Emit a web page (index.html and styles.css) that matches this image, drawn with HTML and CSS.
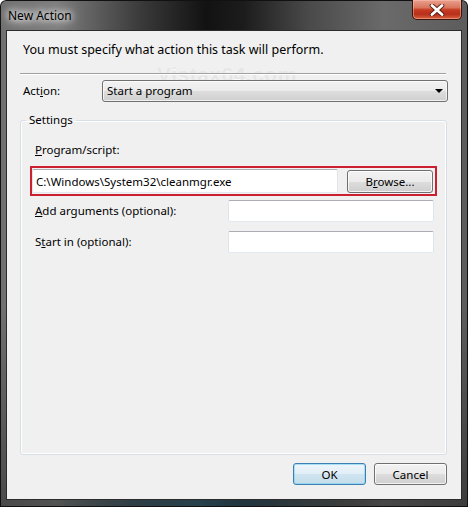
FILE: index.html
```html
<!DOCTYPE html>
<html lang="en">
<head>
    <meta charset="UTF-8">
    <meta name="viewport" content="width=device-width, initial-scale=1.0">
    <title>New Action</title>
    <link rel="stylesheet" href="styles.css">
</head>
<body>

<div class="window">
    <div class="titlebar">
        <span class="title">New Action</span>
        <button class="close" aria-label="Close">
            <svg width="16" height="12" viewBox="0 0 16 12">
                <path d="M3 1.5 L13 10.5 M13 1.5 L3 10.5" stroke="#5a1c10" stroke-width="4.6" stroke-linecap="round"/>
                <path d="M3 1.5 L13 10.5 M13 1.5 L3 10.5" stroke="#fff" stroke-width="2.8" stroke-linecap="round"/>
            </svg>
        </button>
    </div>

    <div class="client">
        <div class="watermark">Vistax64.com</div>

        <p class="intro">You must specify what action this task will perform.</p>
        <hr class="sep">

        <div class="action-row">
            <label class="action-label">Act<u>i</u>on:</label>
            <div class="combo">
                <span>Start a program</span>
                <span class="arrow"></span>
            </div>
        </div>

        <fieldset class="group">
            <legend>Settings</legend>

            <label class="field-label"><u>P</u>rogram/script:</label>
            <div class="highlight">
                <input class="text wide" type="text" value="C:\Windows\System32\cleanmgr.exe">
                <button class="btn browse">B<u>r</u>owse...</button>
            </div>

            <div class="row">
                <label class="field-label"><u>A</u>dd arguments (optional):</label>
                <input class="text small" type="text">
            </div>
            <div class="row">
                <label class="field-label">S<u>t</u>art in (optional):</label>
                <input class="text small" type="text">
            </div>
        </fieldset>

        <div class="actions">
            <button class="btn default">OK</button>
            <button class="btn">Cancel</button>
        </div>
    </div>
</div>

</body>
</html>
```

FILE: styles.css
```css
body {
    margin: 0;
    background: #ffffff;
    font-family: 'Noto Sans', 'Open Sans', sans-serif;
    font-size: 11.5px;
    line-height: 16px;
    color: #000;
}

.window {
    width: 468px;
    height: 507px;
    box-sizing: border-box;
    padding: 0 6px 7px 6px;
    display: flex;
    flex-direction: column;
    border-radius: 6px 6px 0 0;
    background:
        radial-gradient(ellipse 150px 260px at 200px 510px, rgba(60, 110, 130, 0.55), transparent),
        linear-gradient(to bottom, transparent 60%, rgba(0, 0, 0, 0.35)),
        linear-gradient(to right, #6f6f6f 0%, #7d7d7d 12%, #3a3a3a 30%, #121212 44%, #1c1c1c 52%, #4a4a4a 66%, #6a6a6a 82%, #5c5c5c 100%);
    box-shadow: inset 0 0 0 1px #111;
}

/* title bar */
.titlebar {
    height: 30px;
    display: flex;
    align-items: flex-start;
}

.title {
    margin-top: 8px;
    margin-left: 2px;
    padding: 0 6px 0 0;
    font-size: 12px;
    color: #000;
    text-shadow: 0 0 6px #fff, 0 0 10px #fff, 0 0 14px #eee;
}

.close {
    margin-left: auto;
    width: 50px;
    height: 20px;
    padding: 0;
    border: 1px solid #3c160e;
    border-top: none;
    border-radius: 0 0 5px 5px;
    background: linear-gradient(to bottom, #eaa090 0%, #d8765c 40%, #c63a22 52%, #b8301a 75%, #d8623f 100%);
    box-shadow: inset 0 0 0 1px rgba(255, 200, 180, 0.45);
    display: flex;
    align-items: center;
    justify-content: center;
}

/* client area */
.client {
    flex: 1;
    position: relative;
    display: flex;
    flex-direction: column;
    padding: 11px 14px 14px 13px;
    background: #f0f0f0;
    border: 1px solid #2b2b2b;
}

.watermark {
    position: absolute;
    left: 150px;
    top: 33px;
    font-family: 'Liberation Sans', Arial, sans-serif;
    font-weight: bold;
    font-size: 21px;
    line-height: 21px;
    color: #e6e6e6;
    text-shadow: 0 1px 0 #fbfbfb;
    letter-spacing: 0.5px;
}

.intro {
    position: relative;
    margin: 0;
    padding-left: 3px;
    font-size: 12.5px;
}

.sep {
    position: relative;
    margin: 15px 1px 0 0;
    height: 0;
    border: none;
    border-top: 1px solid #a0a0a0;
    border-bottom: 1px solid #ffffff;
}

.action-row {
    position: relative;
    display: flex;
    align-items: center;
    margin-top: 5px;
}

.action-label {
    width: 79px;
    padding-left: 3px;
}

.combo {
    flex: 1;
    height: 20px;
    display: flex;
    align-items: center;
    padding-left: 4px;
    border: 1px solid #707070;
    border-radius: 3px;
    background: linear-gradient(to bottom, #f2f2f2 0%, #ebebeb 50%, #dddddd 51%, #cfcfcf 100%);
    box-shadow: inset 0 0 0 1px rgba(255, 255, 255, 0.7);
    margin-right: -1px;
}

.arrow {
    margin-left: auto;
    margin-right: 4px;
    width: 0;
    height: 0;
    border-left: 4px solid transparent;
    border-right: 4px solid transparent;
    border-top: 4px solid #000;
}

/* settings group */
.group {
    flex: 1;
    margin: 10px 0 0 0;
    padding: 14px 9px 0 9px;
    border: 1px solid #d5dfe5;
    border-radius: 3px;
    box-shadow: inset 0 0 0 1px #ffffff;
    min-width: 0;
}

.group legend {
    padding: 0 3px;
    margin-left: -4px;
}

.field-label {
    display: block;
    padding-left: 5px;
}

.highlight {
    display: flex;
    align-items: flex-start;
    margin-top: 8px;
    padding: 1px 2px 1px 0;
    border: 2px solid #cc1f2f;
}

.text {
    box-sizing: border-box;
    margin: 0;
    padding: 0 3px;
    font-family: inherit;
    font-size: 11.5px;
    color: #000;
    background: #fff;
    border: 1px solid #e2e3ea;
    border-top-color: #abadb3;
    border-bottom-color: #e3e9ef;
    border-radius: 2px;
    outline: none;
}

.text.wide {
    width: 306px;
    height: 24px;
}

.text.small {
    width: 206px;
    height: 22px;
    margin-left: auto;
    margin-right: 3px;
}

.row {
    display: flex;
    align-items: center;
    margin-top: 4px;
}

.row + .row {
    margin-top: 9px;
}

/* buttons */
.btn {
    font-family: inherit;
    font-size: 11.5px;
    color: #000;
    height: 22px;
    padding: 0;
    border: 1px solid #707070;
    border-radius: 3px;
    background: linear-gradient(to bottom, #f2f2f2 0%, #ebebeb 50%, #dddddd 51%, #cfcfcf 100%);
    box-shadow: inset 0 0 0 1px rgba(255, 255, 255, 0.75);
}

.browse {
    width: 86px;
    height: 23px;
    margin-left: auto;
    margin-top: 1px;
}

.actions {
    display: flex;
    justify-content: flex-end;
    gap: 8px;
    margin-top: 8px;
}

.actions .btn {
    width: 73px;
}

.btn.default {
    border-color: #3c7fb1;
    background: linear-gradient(to bottom, #edf5fa 0%, #e2eff7 50%, #d0e5f1 51%, #c4dcea 100%);
    box-shadow: inset 0 0 0 1px rgba(120, 210, 245, 0.6);
}
```
